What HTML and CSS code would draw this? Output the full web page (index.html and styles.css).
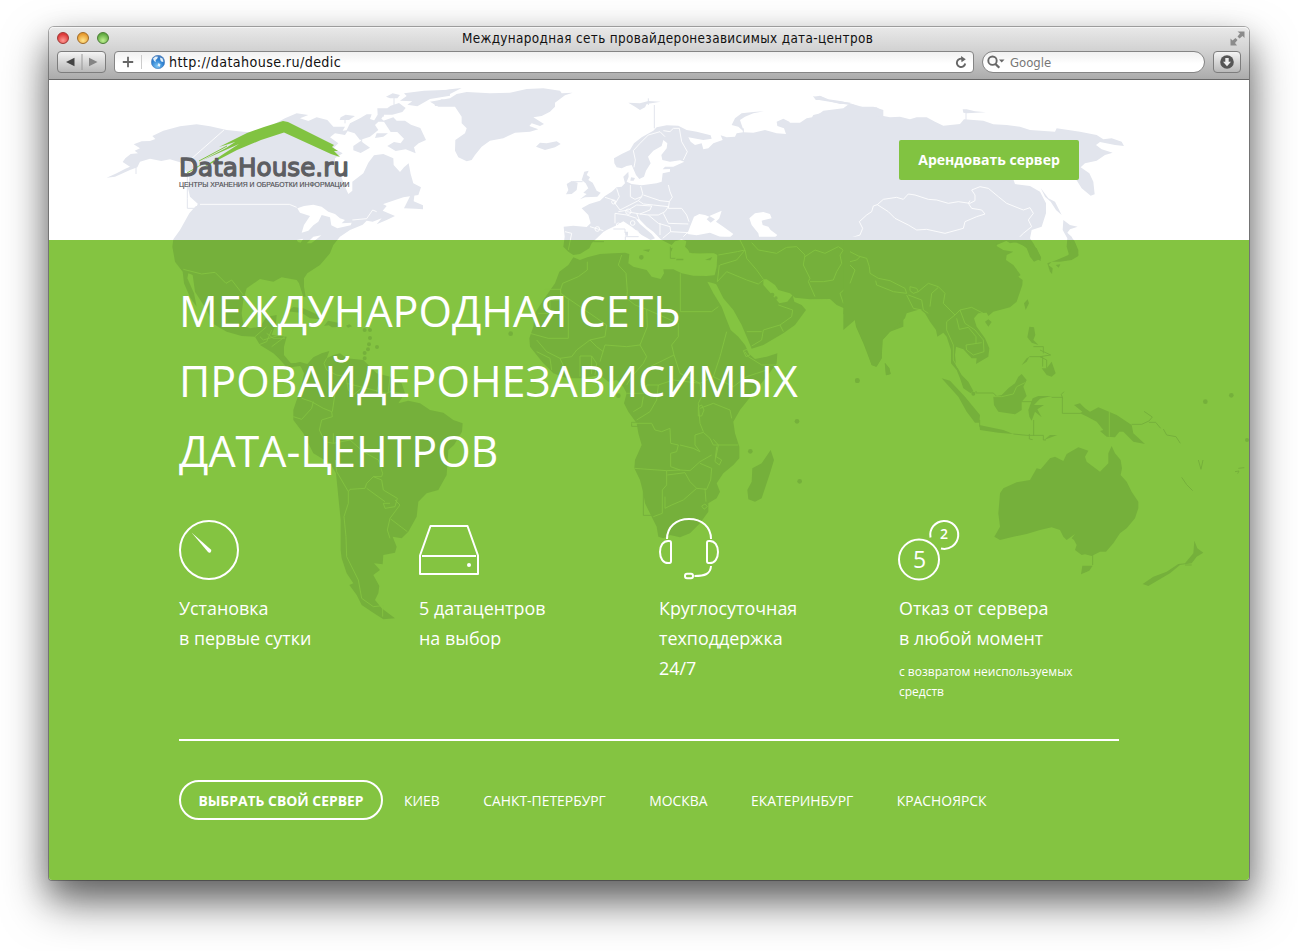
FILE: index.html
```html
<!DOCTYPE html>
<html lang="ru">
<head>
<meta charset="utf-8">
<title>Международная сеть провайдеронезависимых дата-центров</title>
<link rel="stylesheet" href="styles.css">
</head>
<body>
<div class="window">
  <div class="chrome">
    <div class="titlebar">
      <div class="lights"><i class="light red"></i><i class="light yellow"></i><i class="light green"></i></div>
      <div class="title">Международная сеть провайдеронезависимых дата-центров</div>
      <svg class="expand" width="15" height="15" viewBox="0 0 15 15"><path d="M7.5.5H14.500V7L12.500 5 9.500 7.500 7.500 5.500 10 2.500z M.5 7.500 2.500 9.500 5.500 7 7.500 9 5 12 7 14.500H.5z" fill="#8b8b8b"/></svg>
    </div>
    <div class="toolbar">
      <div class="navbtns">
        <svg width="48" height="20" viewBox="0 0 48 20"><path d="M16.500 5.800v8.400L8 10z" fill="#444"/><path d="M31 5.800v8.400L39.500 10z" fill="#848484"/><path d="M24 2v16" stroke="#9a9a9a"/></svg>
      </div>
      <div class="address">
        <svg width="28" height="20" viewBox="0 0 28 20"><path d="M13 4.800v10.400M7.800 10h10.400" stroke="#666" stroke-width="1.800"/><path d="M26.500 3v14" stroke="#ccc"/></svg>
        <svg class="globe" width="14" height="14" viewBox="0 0 14 14"><defs><radialGradient id="globe" cx=".45" cy=".8" r=".8"><stop offset="0" stop-color="#7cc6f5"/><stop offset=".6" stop-color="#2d7fd0"/><stop offset="1" stop-color="#4b7fc0"/></radialGradient></defs><circle cx="7" cy="7" r="6.700" fill="url(#globe)" stroke="#3b70b0" stroke-width=".5"/><path d="M2 3.500 4.500 1.500 7 1.800 6 4 4.500 5 5 7 3 6zM9 2.500l2.500 1 1 3-1.500.5-1.500-1.500zM7.500 8 9.500 9.500 8.500 12 6.500 10.500z" fill="#e4f1fa"/></svg>
        <span class="url">http://datahouse.ru/dedic</span>
        <svg class="reload" width="12" height="13" viewBox="0 0 12 13"><path d="M8.200 3.200A4.200 4.200 0 1 0 10.200 7.500" fill="none" stroke="#666" stroke-width="1.900"/><path d="M6 0l4.800 3.200L6.500 6.200z" fill="#666"/></svg>
      </div>
      <div class="search">
        <svg width="20" height="16" viewBox="0 0 20 16"><circle cx="6.500" cy="6.700" r="4.200" fill="none" stroke="#686868" stroke-width="1.900"/><path d="M9.500 10l3.800 3.800" stroke="#686868" stroke-width="2.300"/><path d="M13 5.500h5.500L15.700 8.500z" fill="#686868"/></svg>
        <span>Google</span>
      </div>
      <div class="download"><svg width="14" height="14" viewBox="0 0 14 14"><circle cx="7" cy="7" r="6.800" fill="#565656"/><path d="M5.300 3h3.400v3.800H11L7 11.200 3 6.800h2.300z" fill="#eee"/></svg></div>
    </div>
  </div>

  <header class="header">
    <svg class="map" viewBox="49 80 1200 160">
      <defs>
        <g id="world">
          <!-- North America and the Canadian islands -->
          <g transform="translate(100 80) scale(.33333)">
            <path class="land" d="M20 293 50 280 76 266 90 260 68 246 76 235 92 222 114 220 104 212 120 205 101 193 125 184 150 183 166 177 157 168 190 152 240 139 290 133 330 139 380 150 430 155 480 158 530 128 555 115 590 100 625 105 600 115 625 123 650 112 682 120 700 140 735 140 728 152 745 150 735 165 705 160 690 172 715 190 700 205 728 220 705 235 705 262 720 280 735 320 745 342 757 332 757 305 790 280 805 248 822 226 850 222 880 235 881 255 900 276 912 262 926 250 932 282 940 310 963 322 955 345 910 352 850 372 808 390 845 370 860 378 848 392 885 408 860 420 830 433 845 415 818 425 800 422 788 434 750 450 720 470 700 495 690 520 660 555 622 580 612 595 612 620 617 650 610 650 597 610 590 600 545 592 520 605 480 597 440 625 430 660 425 700 430 735 450 745 480 740 500 710 530 705 528 730 515 765 560 770 552 800 552 825 572 850 602 848 620 856 615 868 600 858 572 862 545 843 520 820 480 795 465 770 425 768 380 755 340 732 320 690 285 635 278 585 265 580 262 595 282 640 290 680 270 652 252 610 248 575 225 545 217 500 220 478 240 450 268 400 282 384 294 372 270 350 264 325 268 292 262 278 240 247 210 238 184 243 150 236 120 245 112 262 90 270 45 290z"/>
            <path class="land" d="M858 50l20-10 22 5-8 10-22 0zM900 62l20-14-8-8 60-8 78-3v18l-60 10-38 22-30-5 15-10zM1003 68l22-10 25 4v16l-45 0zM832 85l30 0 10-8 25-8 20 15-10 12-30 8-25 0-8 12 12 10-35-2 12-20zM722 112l15-8 28 4-18 12-28 0zM750 130l30-15 20-12 15 0-5 14 25 8-10 10 10 15-25 20-30 10-16-20-25-8zM850 122l30-10 10 10 25 0 18 12 28 10 17 36-22 10-14 12 5 18-30-12-30 5-25-15 20-12 20 4 10-14-20-20-20 0zM760 198l22-15 28 20-28 16-22-8zM830 160l34 0-14 10-25 4zM912 385l20-40 12-6-3 25 28 12 0 12-22-2z"/>
            <path class="hair" d="M882 50v30M850 90v20M785 175v15M735 110v20M108 262v20M262 290v95h20"/>
            <path class="border" d="M372 150 270 240 282 262 262 285M300 373H568L590 382M757 420 800 416 818 390 830 395M250 568 305 582 345 577 378 610 395 600 430 645M465 770 500 740M480 770 490 780 540 765M515 800 555 770"/>
            <path class="sea" d="M592 385 612 378 640 374 665 380 685 395 705 402 720 415 735 420 725 430 755 428 752 436 712 445 694 436 690 412 665 405 655 425 640 436 625 452 605 458 612 435 630 408 600 398zM262 355l25 15 5 8-18 0zM590 480l20-4-8 12-8-2zM620 490l20-20 24-4-30 24z"/>
          </g>
          <!-- Caribbean and South America -->
          <g transform="translate(100 230) scale(.33333)">
            <path class="land" d="M528 375 550 380 575 402 600 396 622 402 640 382 665 370 688 363 680 385 700 375 720 370 740 385 790 390 830 430 870 440 905 460 915 490 895 520 925 512 960 520 990 540 1030 548 1060 570 1088 580 1086 605 1062 645 1045 660 1040 735 1015 780 980 790 955 815 950 860 925 905 905 925 878 920 890 950 885 968 850 975 848 1003 822 1000 840 1020 820 1035 838 1068 835 1090 825 1110 845 1135 885 1165 850 1168 815 1145 785 1125 770 1095 748 1065 760 1060 740 1030 725 985 722 960 722 870 715 800 708 730 690 700 640 670 610 610 580 570 580 540 590 510 602 480 612 430 600 405 560 412z"/>
            <path class="land" d="M560 245l20-14 30 4 50 22 14 12-44-4-24-16-30-4zM672 288l12-16 30 6 12 12-30 2-10-6zM738 287l10-4 8 6-12 4z"/>
            <path class="land" d="M788 300a6 6 0 1 0 12 0a6 6 0 1 0-12 0M804 300a6 6 0 1 0 12 0a6 6 0 1 0-12 0M804 324a6 6 0 1 0 12 0a6 6 0 1 0-12 0M801 343a6 6 0 1 0 12 0a6 6 0 1 0-12 0M798 358a6 6 0 1 0 12 0a6 6 0 1 0-12 0M825 351a6 6 0 1 0 12 0a6 6 0 1 0-12 0M788 369a6 6 0 1 0 12 0a6 6 0 1 0-12 0M788 385a6 6 0 1 0 12 0a6 6 0 1 0-12 0"/>
            <path class="border" d="M680 385 672 400 680 420 710 435 738 440 745 480 760 495 790 470M605 505 635 515 670 535 695 545 697 560 665 570 658 600 675 635 700 640 700 610M640 515 635 535 605 568 580 560M705 490 697 545M740 460 860 490 870 485 900 490M800 440 785 480M840 450 830 485M870 440 865 485M700 640 750 630 790 665 835 690 848 730 845 740 820 740 800 760 795 775 750 778 745 785 710 725 706 690M820 740 845 750 850 780 892 805 885 830 855 835 850 820 870 820M800 775 855 815M885 810 900 825 870 865 862 900 870 925M872 867 922 905M745 785 745 820 732 860 738 920 740 980 775 1050 785 1105 820 1130 848 1127V1160M500 310 520 325 555 325M475 345 500 335 515 300"/>
          </g>
          <!-- Greenland, Europe and western Siberia -->
          <g transform="translate(440 80) scale(.33333)">
            <path class="land" d="M-10 35 30 28 65 24 30 42-10 50zM-30 65 0 60 30 55 50 42 80 36 150 40 210 38 260 27 310 25 360 32 365 40 398 38 375 46 345 68 345 80 330 95 305 108 280 112 312 132 300 138 275 130 268 138 295 148 270 155 225 158 190 175 150 182 125 200 105 225 95 240 80 244 55 232 45 212 46 180 75 160 80 145 65 130 65 110 45 80-5 80zM288 200 300 188 320 190 350 184 362 192 345 202 315 210zM565 68 600 70 625 63 662 65 620 72 615 82 600 90 585 80zM875 135 885 115 905 100 940 96 972 94 940 100 915 110 900 120 905 135 912 155 895 140zM1123 50 1140 48 1165 60 1232 68 1225 74 1150 62 1125 58z"/>
            <path class="land" d="M522 235 545 222 570 210 582 190 605 172 640 152 650 142 680 136 715 137 740 150 770 155 812 166 815 176 790 180 745 172 752 185 765 195 785 190 790 208 805 205 820 190 848 180 842 166 860 172 885 170 890 160 910 157 940 158 975 150 1010 160 1038 162 1032 145 1012 138 1010 125 1030 116 1048 125 1060 145 1072 152 1065 178 1075 182 1088 175 1086 162 1070 148 1063 130 1085 130 1110 122 1120 105 1160 95 1200 88 1225 85 1238 72 1250 80 1300 80 1330 90V520H755L735 500 740 484 725 478 705 484 695 495 670 482 662 478 640 455 620 440 598 418 588 418 600 432 635 462 645 475 632 480 605 465 575 440 550 424 530 436 500 450 490 456 465 480 455 490 448 505 420 522 400 525 385 515 370 500 374 470 371 440 400 437 440 441 452 430 445 405 425 385 448 372 480 362 495 348 515 335 530 322 545 320 555 310 550 290 565 275 566 290 560 305 575 312 605 316 650 310 665 305 668 280 690 275 690 267 668 268 675 260 700 260 733 245 720 241 690 245 667 240 664 225 680 205 682 190 670 180 665 198 640 212 624 230 632 250 618 272 612 290 598 297 588 285 575 255 560 258 545 265 530 262 523 250z"/>
            <path class="land" d="M433 275 446 272 440 285 450 292 445 300 458 308 470 332 482 338 472 350 435 352 420 358 440 342 430 338 445 325 437 310 425 300zM380 312 395 303 413 308 410 330 395 342 378 343 385 330zM573 292l12 2-4 8-10 0zM690 505l4 10 4-12zM710 536l20 0 0 5-22 0zM795 540l22-9-6 10z"/>
            <path class="land" d="M608 510l22-2-4 8zM555 455l9 0 0 12-8 0zM597 532a7 7 0 1 0 14 0a7 7 0 1 0-14 0"/>
            <path class="hair" d="M643 75v70M910 145v15M398 305h30M691 500v35h15M520 447h35v12M556 480v-10h40M460 485h32M625 55v20"/>
            <path class="border" d="M582 262 586 240 580 212 600 190 625 165 660 155 675 170M670 152 690 155 700 145 718 145 725 185 742 215 730 240M571 315V350L585 358 605 350 608 340 602 318M685 315 690 335 697 352 688 365 660 362 610 345M605 350 595 362 610 372 640 375 685 380M688 365 685 385 725 385 740 405 747 425M595 362 540 390 525 370 520 360 495 352M530 325 538 350 525 372M535 395 565 390 590 375 635 378 630 390 600 402 560 395M525 430V400L560 405 590 415M600 402 625 405 655 405 675 395 685 380M625 405 655 430 690 440 692 455 668 475M670 400 685 430 745 432M692 455 745 458M660 430V465M375 455 395 460 385 510M450 440 490 452M590 400 600 425M730 470 745 455M1330 375 1305 375 1298 395 1265 415 1260 450 1240 475 1215 478 1205 520"/>
            <g class="border"><circle cx="565" cy="395" r="8"/><circle cx="521" cy="366" r="6"/><circle cx="472" cy="447" r="7"/><circle cx="535" cy="435" r="6"/><circle cx="578" cy="429" r="7"/><circle cx="589" cy="458" r="6"/></g>
            <path class="sea" d="M742 462 750 440 762 410 778 402 795 405 808 410 800 418 812 428 825 418 808 408 845 392 838 415 828 425 850 440 880 462 870 472 840 470 810 458 790 462 770 466zM928 415 945 400 970 396 990 402 995 415 965 422 968 435 985 440 992 450 1012 465 1002 475 1000 485 1015 505 1008 520 985 522 965 505 960 485 955 460 935 435z"/>
          </g>
          <!-- Siberia, Mongolia and the Far East -->
          <g transform="translate(800 80) scale(.33333)">
            <path class="land" d="M-30 128 0 128 20 115 45 110 70 92 130 85 150 70 190 82 230 82 245 92 235 98 218 110 250 108 270 112 300 110 330 118 350 112 380 112 405 125 430 137 480 132 492 118 550 122 580 133 620 135 660 140 690 150 765 155 770 145 840 155 890 165 910 178 935 175 965 185 972 198 945 195 900 186 888 195 905 208 938 218 915 225 890 242 855 250 842 262 868 280 880 305 884 343 872 347 845 325 828 298 640 298 645 312 690 318 720 335 738 370 738 400 725 440 695 450 690 475 700 490 722 530 722 543 700 530 688 505 650 488 620 482 590 495 600 560-30 560zM722 324 745 355 765 365 785 405 768 390 752 365 735 350zM790 420 810 435 833 440 810 448 802 458 815 470 828 495 835 525 810 535 800 500 802 475 788 450zM488 88 500 88 525 94 558 97 500 100 490 98z"/>
            <path class="hair" d="M498 95v25M40 50l40 10 40 8 30 4"/>
            <path class="land" d="M42 52 60 47 85 58 125 64 150 70 120 72 75 60 48 60z"/>
            <path class="border" d="M30 560 15 520 60 500 100 515 135 515 130 490 140 478 180 465 188 445 178 425 200 405 215 395 220 378 232 374 250 358 290 352 310 358 325 342 345 345 385 358 410 360 445 370 475 365 510 370 525 362 525 345 515 330 540 320 565 325 595 350 620 370 670 390 690 383 700 400 685 420 695 440 670 460 650 480M232 374 265 395 285 415 325 435 350 450 380 448 435 460 490 445 495 425 530 410 555 402 545 390 515 385 505 370 510 362"/>
          </g>
          <!-- Africa, Arabia and the Indian Ocean -->
          <g transform="translate(500 230) scale(.33333)">
            <path class="land" d="M220 82 240 90 262 82 300 72 340 70 375 68 388 72 385 100 400 110 440 120 455 140 482 147 492 130 490 118 520 118 545 130 580 137 620 138 648 135 655 165 640 160 622 155 640 190 665 230 680 270 692 300 715 320 735 345 748 372 765 387 800 380 832 370 830 400 800 440 760 490 720 540 700 575 705 610 718 650 718 685 700 705 670 730 650 760 660 785 650 805 625 820 625 845 600 880 570 910 540 922 510 915 490 925 475 920 470 890 455 860 435 820 430 790 420 750 403 715 405 690 425 645 415 610 410 580 385 545 372 520 380 490 370 470 350 450 325 455 300 435 250 445 200 445 160 430 130 400 110 375 90 350 88 325 100 290 105 250 130 210 165 160 178 125 205 105z"/>
            <path class="land" d="M558 20 560 45 568 68 600 70 640 68 652 75 650 110 643 140 650 165 670 205 700 240 725 285 742 325 755 356 790 345 850 310 885 285 918 240 905 225 883 215 878 195 862 215 838 220 825 205 808 185 790 165 790 148 800 148 825 165 835 180 870 190 885 203 930 208 990 207 1010 225 1032 235 1030 252 1050 258 1060 245 1068 290 1090 340 1115 405 1130 410 1145 385 1148 330 1170 305 1210 290V20z"/>
            <path class="land" d="M812 660 822 690 810 730 785 805 765 815 745 808 742 780 755 755 757 715 785 700zM1155 398 1168 415 1172 432 1158 436z"/>
            <g class="land"><circle cx="32" cy="311" r="7"/><circle cx="355" cy="497" r="7"/><circle cx="891" cy="574" r="7"/><circle cx="751" cy="664" r="7"/><circle cx="899" cy="754" r="7"/><circle cx="1072" cy="452" r="7"/></g>
            <path class="hair" d="M430 785V856H460M395 577v12h20v-12z"/>
            <path class="border" d="M262 95V120L235 140 188 160 182 178 182 190 320 285M135 178H182V210H150V250H115M205 210V325H145L90 310M182 190 208 210M365 75 355 105 378 130 382 185 380 205 405 225 440 238 442 290 420 345 380 350 315 345 300 395M541 130V245H635L655 230M440 238 535 280V320L515 345 522 375 440 415M320 285 315 320 270 330 230 360 215 380 180 385 140 365 110 330M270 330 290 350 310 365M240 440V378H275V432M275 378 290 400 285 435M155 420 150 385 110 365M205 440 180 385M420 345 440 380 430 400 395 440 380 465M522 375 540 430 600 460 640 440 660 380 680 305M640 440 700 470 740 440M740 440 770 430 800 420M735 365 745 380 785 405 825 405M730 362 742 358 750 375 738 380zM380 490H440V465H475L470 510 450 545 410 570M475 465 520 450 600 460 605 500 595 520 600 580 610 605M600 535 640 520 690 540 695 565M595 530 605 525 612 540 605 558 595 558zM400 545 425 530 430 500M395 580H455L465 600 485 605 510 595 512 640 535 645 530 665 512 670V710L540 720 570 722 600 695 635 675M540 645 580 655 600 665 585 645 585 615 610 607 630 625 640 645 715 645M640 628 655 645 648 680 665 690 658 705 645 695 650 650M403 715 500 722 540 720M500 722V765L487 780V850L460 860M502 735 555 728 570 755 590 775 620 778 632 750 635 715 600 700M590 775 550 810 515 825 495 835 495 800M615 775 618 815M615 822 622 830 612 838 605 828zM660 105 710 90 735 60 712 65 655 75M658 105 652 155 680 125 740 150 775 162 790 150M735 60 740 85 770 120 790 148M755 38 775 60 830 70 860 52 890 50 915 75 910 105 930 145 925 155 945 200M930 155 970 155 1000 150 1010 125 1025 100 1020 75 1030 60 1015 50 975 70 945 60 915 80M1030 60 1050 80 1085 95 1050 105 1055 130 1065 150 1020 190 1030 220M1085 95 1095 70 1115 90 1125 130M735 60 720 30M840 285 850 305M840 285 790 300 785 330 755 348M740 305 785 305M840 285 875 260 878 240 835 225"/>
            <g class="land"><circle cx="817" cy="194" r="6"/><circle cx="828" cy="204" r="5"/></g>
          </g>
          <!-- South-East Asia and Oceania -->
          <g transform="translate(850 230) scale(.33333)">
            <path class="land" d="M-20 20-20 300 15 270 20 290 50 360 65 405 78 410 95 385 97 330 120 305 165 265 170 250 210 238 225 250 240 275 258 300 262 320 280 308 290 320 303 360 303 400 320 420 330 445 340 475 362 490 370 483 355 455 335 435 318 405 315 375 318 350 340 358 365 385 380 385 378 402 415 380 418 355 405 325 380 290 372 265 385 250 410 248 415 258 430 245 480 232 500 215 517 165 518 150 505 140 512 135 490 105 468 90 470 75 490 65 460 60 435 45 462 28 480 40 505 35 530 55 540 80 552 95 574 85 560 55 530 40 520 20zM405 275l10-7 10 8-10 14zM522 220 533 208 537 220 527 240zM655 20 672 30 685 60 685 78 665 90 630 95 605 95 595 105 608 115 606 132 600 125 592 100 620 90 655 75 665 55zM617 105l14-2-5 10zM104 398 118 415 122 432 108 436z"/>
            <path class="land" d="M538 290 552 292 556 315 550 330 565 345 545 338 532 322zM515 405 530 385 538 380 530 395zM575 415 590 415 605 395 617 430 605 440 590 435zM275 445 300 452 345 500 390 555 388 578 375 578 350 545 325 500zM388 585 420 592 460 600 490 612 445 608 390 600zM430 500 455 495 475 475 495 460 505 440 515 432 530 450 520 470 530 498 515 515 515 540 495 553 445 545 432 525zM548 505 565 498 605 498 570 506 552 525 582 525 562 538 575 562 555 545 545 572 538 560 535 540zM672 525 690 520 705 535 720 545 745 532 800 555 845 585 850 610 885 642 850 635 820 605 808 605 795 622 770 620 750 603 760 600 740 575 712 560 690 550 697 545zM582 630 600 615 622 615z"/>
            <path class="land" d="M785 648 795 670 812 690 816 715 812 735 830 755 845 785 865 815 865 835 855 865 830 895 810 910 790 940 768 965 750 965 725 978 705 973 695 975 675 960 680 945 672 930 665 925 675 912 650 930 640 920 630 900 605 892 570 900 530 912 490 920 450 930 433 920 450 890 445 850 450 790 460 775 500 757 540 750 560 715 572 718 600 685 615 680 640 693 650 672 685 652 715 662 705 680 710 695 750 725 775 700 775 670zM697 1007 728 1007 718 1022 693 1033zM1033 932 1042 955 1060 968 1040 980 1025 1000 990 1005 960 1030 895 1068 878 1062 910 1040 950 1025 985 1002 1005 1000 1030 970z"/>
            <g class="land"><circle cx="22" cy="452" r="7"/><circle cx="370" cy="491" r="6"/><circle cx="1066" cy="515" r="7"/><circle cx="1144" cy="496" r="7"/><circle cx="1191" cy="630" r="6"/></g>
            <path class="hair" d="M378 483v6h52l12 12M389 570v20M490 612l40 4h50v14h8M551 570v48M515 515h33M538 380h40v30M550 350h30v20M570 360l32 15-32 5 20 10v25M605 502h32V550h55M638 505l-4-12 8-8M538 612v15l10 2M845 583h30l22-10 10-12-25-17M897 577h20l15 18M940 597l10 18 28 5 13 20M728 975v30M1045 690l8 28 6-28M995 742l15 22 18 18M1155 725l12-2-4 8M1165 715l18-2M1005 1005h20"/>
            <path class="border" d="M0 65 25 78 50 85 58 110 60 130 85 145 120 152 165 175 170 190 130 185 80 165 77 152M180 170 200 175 205 185 190 190 180 182zM205 185 235 160 265 170 285 190 280 220 315 255 290 275 290 300 310 345 310 390 325 415M170 195 190 235 215 240M175 195 215 210 220 240 235 250M265 172 245 190 240 230M315 255 330 240 365 232 400 250M330 240 345 280 375 300 400 330 402 365 370 375 350 360 348 345 395 338M320 265 328 298 355 292 378 320 378 340M430 500 455 500 490 492 500 470 525 458M778 545v75M0 95 20 90 30 80M0 105 15 120 0 160"/>
            <circle class="border" cx="489" cy="454" r="5"/>
          </g>
        </g>
      </defs>
      <use href="#world"/>
    </svg>
    <svg class="logo" width="176" height="72" viewBox="0 0 176 72">
      <path d="M104 1 109 2 155 25 153 27 159 31 155 31 161 37 152 34 105 12.500 82 20 58 30 20 50 49 31 60 24 24 40 47 28 56 22 40 27 68 13 85 7z" fill="#81c341"/>
      <path d="M8 53 25 43M20 41 48 26" stroke="#81c341" stroke-width="1"/>
      <text class="logo-name" x="0" y="56.300" textLength="170" lengthAdjust="spacingAndGlyphs">DataHouse.ru</text>
      <text class="logo-sub" x="0" y="67" textLength="170.500" lengthAdjust="spacingAndGlyphs">ЦЕНТРЫ ХРАНЕНИЯ И ОБРАБОТКИ ИНФОРМАЦИИ</text>
    </svg>
    <a class="rent">Арендовать сервер</a>
  </header>

  <main class="hero">
    <svg class="map" viewBox="49 240 1200 640"><use href="#world"/></svg>
    <h1>Международная сеть<br>провайдеронезависимых<br>дата-центров</h1>
    <div class="features">
      <div class="feature">
        <svg class="icon" width="62" height="64" viewBox="0 0 62 64"><circle cx="30" cy="32" r="29" class="line"/><path d="M12.500 14.500 31.800 31.500A1.600 1.600 0 0 1 29 34z" fill="#fff"/></svg>
        <p>Установка<br>в первые сутки</p>
      </div>
      <div class="feature">
        <svg class="icon" width="62" height="64" viewBox="0 0 62 64"><path class="line" d="M11.500 8H48.500L59 37.500V56H1V37.500zM3 38H57"/><circle cx="50" cy="47" r="2" fill="#fff"/></svg>
        <p>5 датацентров<br>на выбор</p>
      </div>
      <div class="feature">
        <svg class="icon" width="62" height="64" viewBox="0 0 62 64"><path class="line" d="M8 21C8 9 17 1 30 1S52 9 52 21M10.500 23C4 22 1 28 1 34S4 46 10.500 45Q12 45 12 43V25Q12 23 10.500 23zM49.500 23C56 22 59 28 59 34S56 46 49.500 45Q48 45 48 43V25Q48 23 49.500 23zM52 48C51.500 56 46 58 35.500 58M28 55.800H32Q34 55.800 34 58T32 60.200H28Q26 60.200 26 58T28 55.800z"/></svg>
        <p>Круглосуточная<br>техподдержка<br>24/7</p>
      </div>
      <div class="feature">
        <svg class="icon" width="62" height="64" viewBox="0 0 62 64"><circle class="line" cx="20" cy="41.500" r="20"/><path class="line" d="M31.500 19.500A14 14 0 1 1 42 30.500"/><text class="num" x="20.500" y="49.500" font-size="23">5</text><text class="num bold" x="45" y="21" font-size="14">2</text></svg>
        <p>Отказ от сервера<br>в любой момент</p>
        <small>с возвратом неиспользуемых средств</small>
      </div>
    </div>
    <nav class="cities">
      <a class="choose">Выбрать свой сервер</a>
      <a>Киев</a><a>Санкт-Петербург</a><a>Москва</a><a>Екатеринбург</a><a>Красноярск</a>
    </nav>
  </main>
</div>
</body>
</html>
```
FILE: styles.css
```css
* { box-sizing: border-box; }
body {
  margin: 0;
  height: 951px;
  padding: 27px 49px 0;
  background: #fff;
  font-family: "Open Sans", "Noto Sans", sans-serif;
  overflow: hidden;
}
.window {
  width: 1200px;
  height: 853px;
  border-radius: 5px 5px 3px 3px;
  box-shadow: 0 0 0 1px rgba(0,0,0,.3), 0 22px 46px rgba(0,0,0,.5), 0 14px 30px rgba(0,0,0,.28);
}
.chrome {
  height: 53px;
  border-radius: 5px 5px 0 0;
  border-bottom: 1px solid #686868;
  background: linear-gradient(#e9e9e9, #d2d2d2 45%, #ababab);
  box-shadow: inset 0 1px #f6f6f6;
  font-family: "DejaVu Sans Condensed", "DejaVu Sans", sans-serif;
  color: #111;
}
.titlebar { display: flex; align-items: center; height: 22px; padding: 0 4px 0 8px; }
.lights { display: flex; gap: 8px; width: 70px; }
.light { width: 12px; height: 12px; border-radius: 50%; border: 1px solid; }
.red { background: radial-gradient(circle at 50% 75%, #ff9a94, #dd3a3a 70%); border-color: #a03432; }
.yellow { background: radial-gradient(circle at 50% 75%, #ffe58c, #e6982d 75%); border-color: #a06a26; }
.green { background: radial-gradient(circle at 50% 75%, #bff090, #5ea83f 75%); border-color: #4a7c34; }
.title { flex: 1; text-align: center; font-size: 13.4px; letter-spacing: .36px; line-height: 23px; padding-right: 22px; }
.expand { flex: none; }
.toolbar { display: flex; align-items: center; height: 26px; padding: 0 8px; }
.navbtns, .download {
  height: 22px;
  border: 1px solid #7d7d7d;
  border-radius: 4px;
  background: linear-gradient(#f4f4f4, #b9b9b9);
}
.navbtns { width: 49px; margin-right: 8px; }
.address, .search {
  display: flex;
  align-items: center;
  height: 22px;
  border: 1px solid #858585;
  background: linear-gradient(#f1f1f1, #fff 60%);
}
.address { width: 860px; border-radius: 4px; margin-right: 8px; padding-right: 6px; }
.globe { margin: 0 4px 0 8px; }
.url { flex: 1; font-size: 14.2px; letter-spacing: .38px; }
.search { width: 223px; border-radius: 11px; margin-right: 8px; padding-left: 3px; gap: 4px; font-size: 13px; color: #777; }
.download { width: 28px; display: flex; align-items: center; justify-content: center; }

.header {
  position: relative;
  height: 160px;
  display: flex;
  justify-content: space-between;
  align-items: flex-start;
  padding: 40px 170px 0 130px;
  background: #fff;
  color: #e2e5ed;
  --sea: #fff;
}
.map { position: absolute; left: 0; top: 0; width: 100%; height: 100%; }
.land { fill: currentColor; }
.sea { fill: var(--sea); }
.hair { fill: none; stroke: currentColor; stroke-width: 3; }
.border { fill: none; stroke: var(--sea); stroke-width: 2.6; stroke-linejoin: round; }
.hero .map { --sea: #84c441; }
.logo { position: relative; overflow: visible; }
.logo-name { font: 25px "DejaVu Sans", sans-serif; fill: #5d5e62; stroke: #5d5e62; stroke-width: 1.3; stroke-linejoin: round; }
.logo-sub { font: 6.5px "Liberation Sans", sans-serif; fill: #4f5054; stroke: #4f5054; stroke-width: .15; }
.rent {
  position: relative;
  width: 180px;
  height: 40px;
  margin-top: 20px;
  border-radius: 2px;
  background: #81c341;
  color: #fff;
  font-size: 14px;
  font-weight: 700;
  line-height: 40px;
  text-align: center;
}
.hero {
  position: relative;
  height: 640px;
  padding: 36px 130px 0;
  border-radius: 0 0 3px 3px;
  overflow: hidden;
  background: #84c441;
  color: #75b03b;
}
h1 {
  position: relative;
  margin: 0;
  color: #fff;
  font-size: 43px;
  font-weight: 400;
  line-height: 70px;
  text-transform: uppercase;
}
.features { position: relative; display: flex; gap: 40px; height: 223px; margin-top: 32px; color: #fff; }
.feature { width: 200px; }
.icon { display: block; overflow: visible; }
.line { fill: none; stroke: #fff; stroke-width: 2; stroke-linejoin: round; }
.num { fill: #fff; text-anchor: middle; }
.bold { font-weight: 600; }
.feature p { margin: 11px 0 9px; font-size: 17.9px; line-height: 30px; }
.feature small { display: block; font-size: 12px; line-height: 20px; font-weight: 400; }
.cities {
  position: relative;
  display: flex;
  align-items: center;
  gap: 43.5px;
  width: 940px;
  margin-top: -2px;
  padding-top: 39px;
  border-top: 2px solid #fff;
  color: #fff;
  font-size: 13.9px;
  text-transform: uppercase;
  white-space: nowrap;
}
.choose {
  width: 204px;
  height: 40px;
  margin-right: -22.5px;
  border: 2px solid #fff;
  border-radius: 20px;
  font-weight: 700;
  line-height: 38px;
  text-align: center;
}
```
